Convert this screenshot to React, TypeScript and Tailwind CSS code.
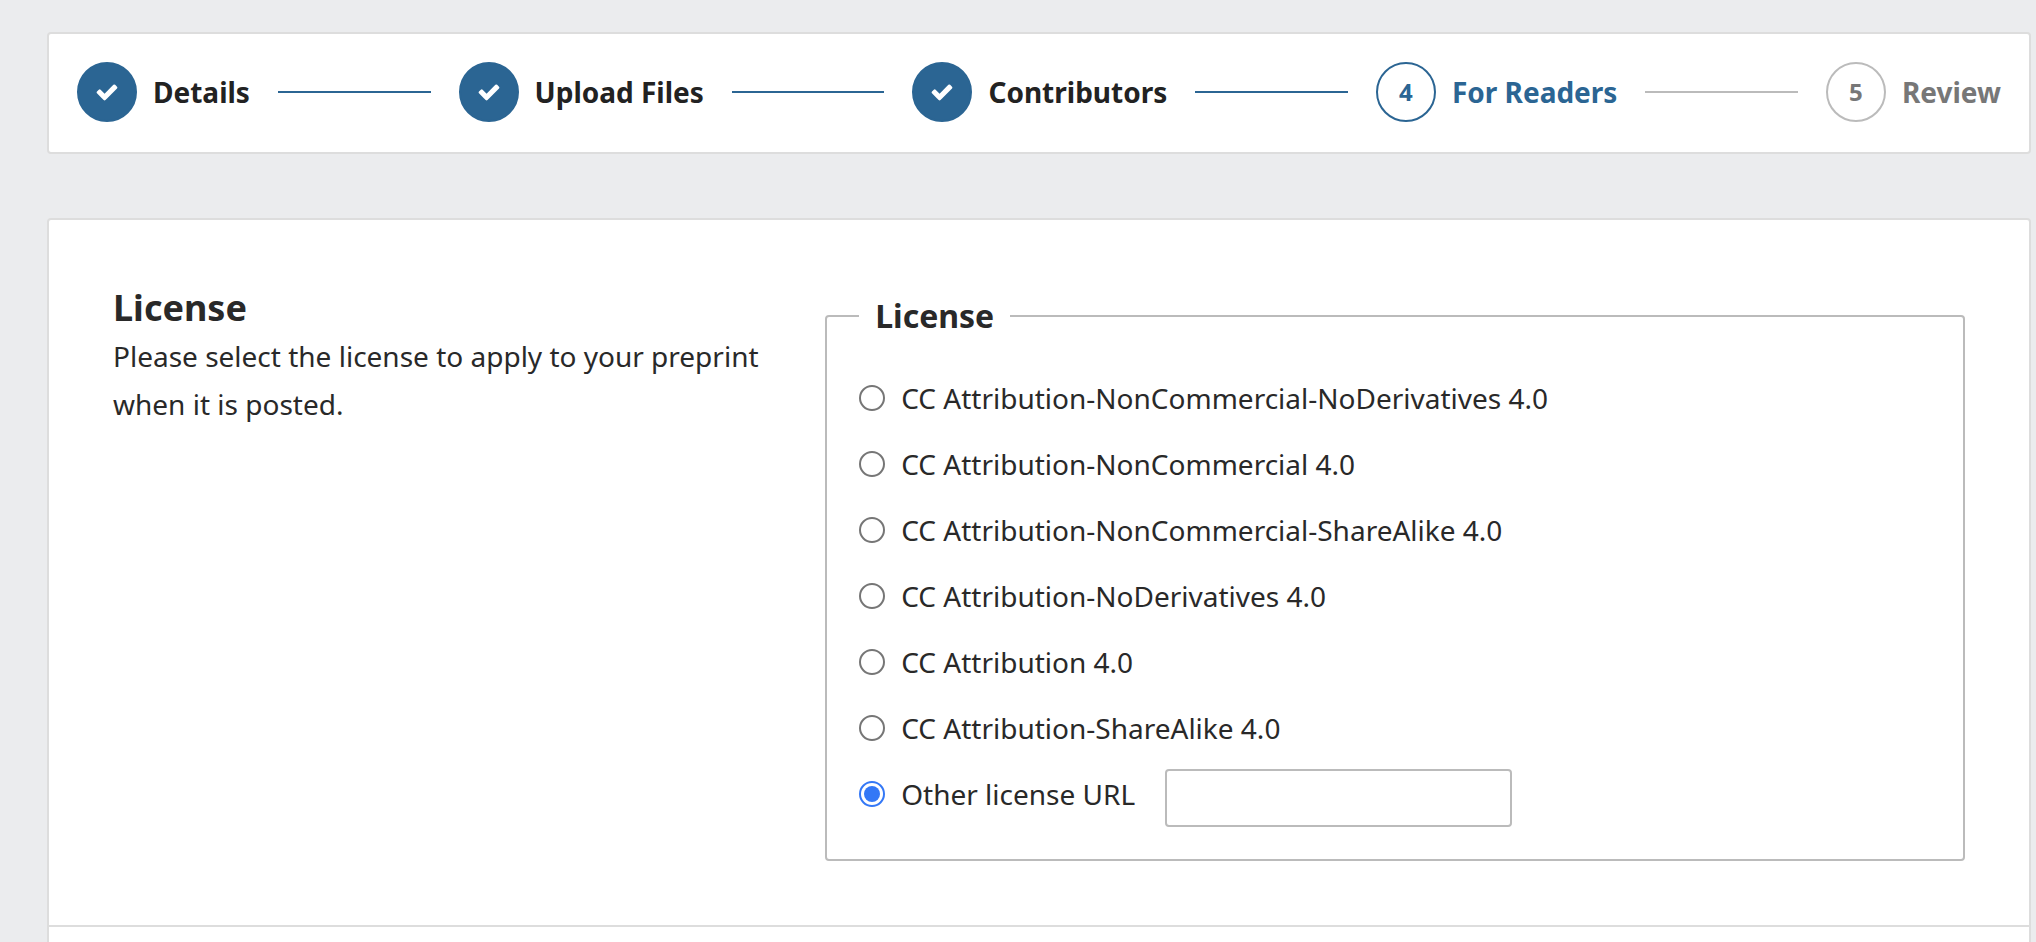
import { useState } from "react";

type StepState = "done" | "current" | "upcoming";

const steps: { label: string; state: StepState }[] = [
  { label: "Details", state: "done" },
  { label: "Upload Files", state: "done" },
  { label: "Contributors", state: "done" },
  { label: "For Readers", state: "current" },
  { label: "Review", state: "upcoming" },
];

const licenses = [
  "CC Attribution-NonCommercial-NoDerivatives 4.0",
  "CC Attribution-NonCommercial 4.0",
  "CC Attribution-NonCommercial-ShareAlike 4.0",
  "CC Attribution-NoDerivatives 4.0",
  "CC Attribution 4.0",
  "CC Attribution-ShareAlike 4.0",
];

const markerStyles: Record<StepState, string> = {
  done: "border-[#2b6593] bg-[#2b6593] text-white",
  current: "border-[#2b6593] bg-white text-[#2b6593]",
  upcoming: "border-[#bbbbbb] bg-white text-[#777777]",
};

const labelStyles: Record<StepState, string> = {
  done: "text-[#222222]",
  current: "text-[#2b6593]",
  upcoming: "text-[#777777]",
};

const radioClass =
  "grid size-[26px] shrink-0 appearance-none place-content-center rounded-full border-2 border-[#767676] bg-white before:size-4 before:rounded-full checked:border-[#3478f6] checked:before:bg-[#3478f6]";

function CheckIcon() {
  return (
    <svg viewBox="0 0 1792 1792" className="size-6" fill="currentColor" aria-hidden="true">
      <path d="M1671 566q0 40-28 68l-724 724-136 136q-28 28-68 28t-68-28l-136-136-362-362q-28-28-28-68t28-68l136-136q28-28 68-28t68 28l294 295 656-657q28-28 68-28t68 28l136 136q28 28 28 68z" />
    </svg>
  );
}

function Steps() {
  return (
    <nav className="rounded border-2 border-[#dddddd] bg-white px-7 pt-7 pb-[30px]" aria-label="Submission steps">
      <ol className="flex items-center gap-7">
        {steps.map((step, i) => (
          <li key={step.label} className={i === 0 ? "flex items-center" : "flex flex-auto items-center gap-7"}>
            {i > 0 && (
              <span
                className={
                  step.state === "upcoming" ? "h-0.5 flex-1 bg-[#bbbbbb]" : "h-0.5 flex-1 bg-[#2b6593]"
                }
              />
            )}
            <button type="button" className="flex items-center gap-4 font-bold whitespace-nowrap">
              <span
                className={`flex size-[60px] items-center justify-center rounded-full border-2 text-2xl ${markerStyles[step.state]}`}
              >
                {step.state === "done" ? <CheckIcon /> : i + 1}
              </span>
              <span className={`text-[28px] leading-[40px] ${labelStyles[step.state]}`}>{step.label}</span>
            </button>
          </li>
        ))}
      </ol>
    </nav>
  );
}

export default function App() {
  const [selected, setSelected] = useState("other");

  return (
    <div className="h-screen overflow-hidden bg-[#ebecee] pt-8 pr-[5px] pl-[47px] font-['Noto_Sans',sans-serif] text-[28px] text-[#292929]">
      <Steps />
      <main className="mt-16 rounded border-2 border-[#dddddd] bg-white">
        <section className="grid grid-cols-[35%_1fr] items-start gap-16 border-b-2 border-[#dddddd] p-16">
          <div>
            <h2 className="text-[36px] leading-[48px] font-bold">License</h2>
            <p className="leading-[48px]">Please select the license to apply to your preprint when it is posted.</p>
          </div>
          <fieldset className="min-w-0 rounded border-2 border-[#bbbbbb] px-8 pb-8">
            <legend className="px-4 text-[32px] leading-[64px] font-bold">License</legend>
            <div className="flex flex-col gap-4 pt-[25px]">
              {licenses.map((name) => (
                <label key={name} className="flex h-[50px] items-center gap-4">
                  <input
                    type="radio"
                    name="license"
                    className={radioClass}
                    checked={selected === name}
                    onChange={() => setSelected(name)}
                  />
                  {name}
                </label>
              ))}
              <div className="flex items-start gap-[30px]">
                <label className="flex h-[50px] items-center gap-4">
                  <input
                    type="radio"
                    name="license"
                    className={radioClass}
                    checked={selected === "other"}
                    onChange={() => setSelected("other")}
                  />
                  Other license URL
                </label>
                <input
                  type="text"
                  aria-label="Other license URL"
                  className="h-[58px] w-[347px] rounded border-2 border-[#bbbbbb] bg-white px-4"
                />
              </div>
            </div>
          </fieldset>
        </section>
        <div className="h-16" />
      </main>
    </div>
  );
}
